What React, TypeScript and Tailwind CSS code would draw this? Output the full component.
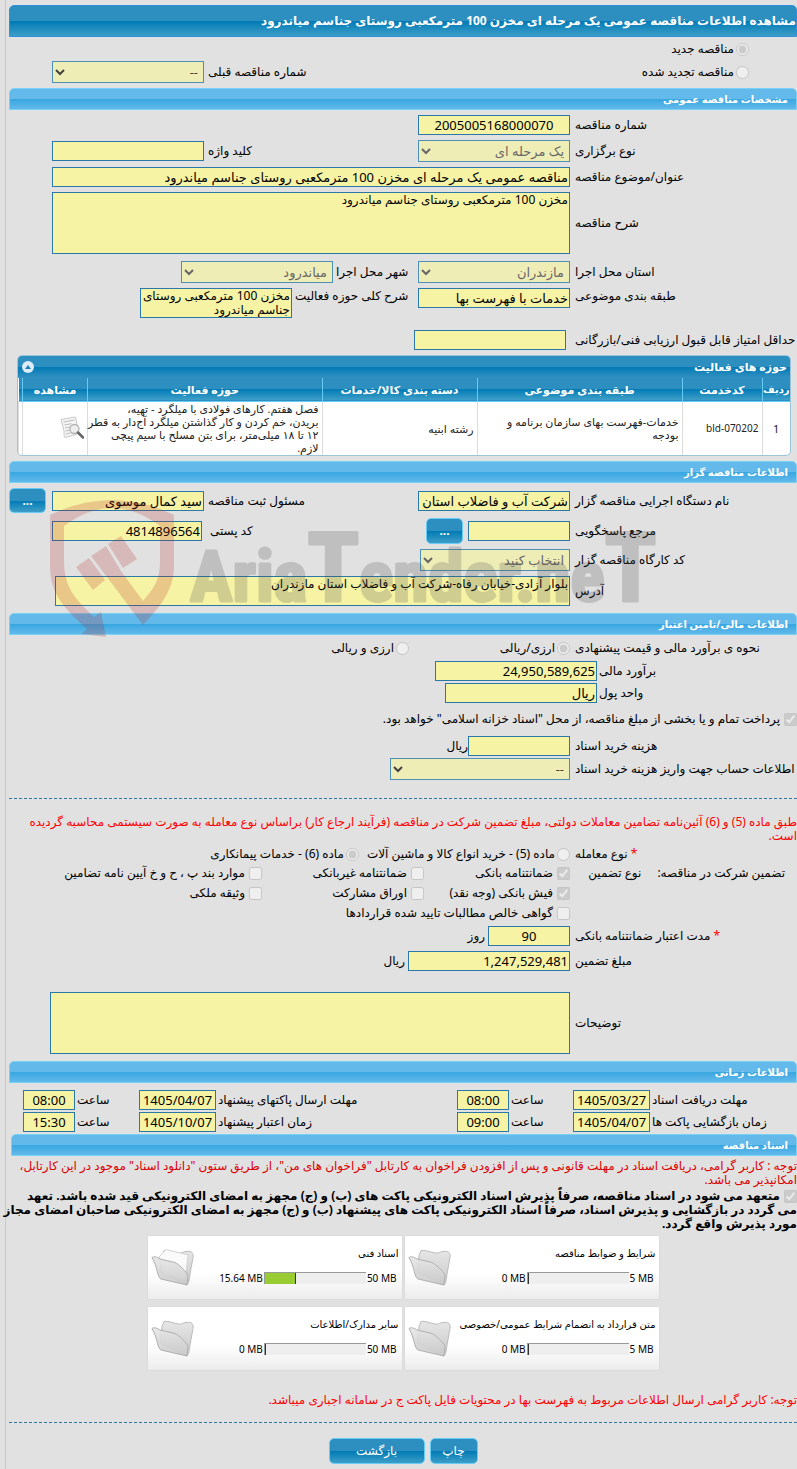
import React, { useId } from "react";
import clsx from "clsx";

const fieldBase = "border border-[#2a78a8] bg-[#f6f3a5] px-px text-black outline-none";

type InputProps = {
  id?: string;
  label?: string;
  value?: string;
  className?: string;
};

const TextInput: React.FC<InputProps> = ({ id, label, value = "", className }) => (
  <input
    id={id}
    aria-label={label}
    type="text"
    readOnly
    value={value}
    className={clsx(fieldBase, "h-5 shrink-0 text-[13px] leading-[18px]", className)}
  />
);

const TextArea: React.FC<InputProps> = ({ id, value = "", className }) => (
  <textarea
    id={id}
    readOnly
    value={value}
    className={clsx(
      fieldBase,
      "block resize-none overflow-hidden text-xs leading-[14px]",
      className
    )}
  />
);

const SelectBox: React.FC<InputProps> = ({ id, value = "--", className }) => (
  <select
    id={id}
    disabled
    className={clsx(
      "h-[22px] shrink-0 border border-[#0f6ea0] bg-[#f6f3a5] px-px text-[13px] leading-4 opacity-70",
      value === "--" ? "text-black" : "text-[#333]",
      className
    )}
  >
    <option>{value}</option>
  </select>
);

type RowProps = {
  label: string;
  htmlFor?: string;
  required?: boolean;
  className?: string;
  labelClassName?: string;
  children: React.ReactNode;
};

// A form line: the label hugs the field that follows it
const Row: React.FC<RowProps> = ({
  label,
  htmlFor,
  required,
  className,
  labelClassName = "w-[222px] ml-[5px]",
  children,
}) => (
  <div className={clsx("flex items-center", className)}>
    <label
      htmlFor={htmlFor}
      className={clsx("shrink-0 whitespace-nowrap text-left", labelClassName)}
    >
      {required && <span className="text-[#f00]">* </span>}
      {label}
    </label>
    {children}
  </div>
);

type TickProps = {
  type: "radio" | "checkbox";
  name?: string;
  label: string;
  checked?: boolean;
  className?: string;
};

const Tick: React.FC<TickProps> = ({ type, name, label, checked, className }) => {
  const id = useId();
  return (
    <span className={clsx("flex shrink-0 items-center whitespace-nowrap", className)}>
      <input
        id={id}
        type={type}
        name={name}
        defaultChecked={checked}
        disabled
        className="size-[13px]"
      />
      <label htmlFor={id} className={type === "radio" ? "mr-0.5" : "mr-1"}>
        {label}
      </label>
    </span>
  );
};

const SectionBar: React.FC<{ title: string; className?: string }> = ({
  title,
  className,
}) => (
  <h2
    className={clsx(
      "flex h-[22px] items-center rounded-t-[5px] border border-[#78d2f7] bg-[linear-gradient(#63b9ea_50%,#38a6e0_50%,#63b9ea)] pr-2 text-[10px] font-bold text-white",
      className
    )}
  >
    {title}
  </h2>
);

const Button: React.FC<{ children: React.ReactNode; className?: string; label?: string }> = ({
  children,
  className,
  label,
}) => (
  <button
    type="button"
    aria-label={label}
    className={clsx(
      "shrink-0 rounded-[5px] border border-[#66ccf5] bg-[linear-gradient(#2d8fbf_50%,#007ab5_50%,#3e9ec8)] text-white",
      className
    )}
  >
    {children}
  </button>
);

const PreviewIcon = () => (
  <svg width="24" height="24" viewBox="0 0 24 24" fill="none">
    <path d="M1 3.5 15.500 1 19 17.500 5 21.500C3 19 5 17 3.500 13Z" fill="#f4f4f4" stroke="#c9c9c9" />
    <path
      d="m3.500 6 11-2M4.500 9l7-1.300M5 12l5-1M5.500 15l5-1M6 18l6-1.500"
      stroke="#bdbdbd"
    />
    <circle cx="14.500" cy="13" r="4.500" fill="#ececec" fillOpacity=".85" stroke="#b5b5b5" strokeWidth="1.300" />
    <path d="m18 16.500 5 5" stroke="#666" strokeWidth="2.500" strokeLinecap="round" />
  </svg>
);

const FolderIcon: React.FC<{ filled?: boolean }> = ({ filled }) => (
  <svg width="44" height="38" viewBox="0 0 44 38" fill="none">
    <defs>
      <linearGradient id="folder" x1="0" y1="0" x2="0" y2="1">
        <stop offset="0" stopColor="#e6e6e6" />
        <stop offset="1" stopColor="#c9c9c9" />
      </linearGradient>
    </defs>
    <path
      d="M11 7.500 13 2.500C16 1.500 22 4 27 5 31 6 32 3 36 3.500 40 2.500 43 5 42 9.500L39 26C38.500 31 37.500 36 36 37L9 24Z"
      fill="url(#folder)"
      stroke="#bcbcbc"
    />
    {filled && (
      <path
        d="M8 9 15 1.500 37 7 34 32 12 26Z"
        fill="#fafafa"
        stroke="#d5d5d5"
      />
    )}
    <path
      d="M1 9.500C3 8 6 9 9 11L22 14C27 15 31 20 35 24L37 27 36 37 10 31C6 29 7 20 1 9.500Z"
      fill="url(#folder)"
      fillOpacity=".9"
      stroke="#b0b0b0"
    />
  </svg>
);

const Watermark = () => (
  <svg
    className="pointer-events-none absolute top-px left-[41px] z-10"
    width="610"
    height="160"
    viewBox="50 484 610 160"
  >
    <g fill="#b41919" fillOpacity=".2">
      <path
        fillRule="evenodd"
        d="M50 515Q112 485 174 515V566C174 590 160 607 143 625L107 577 91 556 106 546 121 571 143 601C154 588 160 580 160 562V526Q112 490 64 526V562C64 590 79 602 94 617L101 612 106 637 81 634 87 629C66 610 50 595 50 566Z"
      />
      <path d="M76 567 89 558 105 580 93 590ZM108 544 121 536 137 559 123 568Z" />
    </g>
    <text
      x="190"
      y="601"
      direction="ltr"
      fill="#4b4b4b"
      stroke="#4b4b4b"
      strokeWidth="3"
      strokeLinejoin="round"
      opacity=".22"
      fontSize="71"
      fontWeight="bold"
      fontFamily="'Liberation Sans Narrow', 'Roboto Condensed', 'Liberation Sans', sans-serif"
    >
      Aria<tspan fontSize="96">T</tspan>ender.ne<tspan fontSize="96">T</tspan>
    </text>
  </svg>
);

const activities = [
  {
    row: "1",
    code: "bld-070202",
    subject: "خدمات-فهرست بهای سازمان برنامه و بودجه",
    category: "رشته ابنیه",
    scope: [
      "فصل هفتم. کارهای فولادی با میلگرد - تهیه،",
      "بریدن، خم کردن و کار گذاشتن میلگرد آج‌دار به قطر",
      "۱۲ تا ۱۸ میلی‌متر، برای بتن مسلح با سیم پیچی",
      "لازم.",
    ].join("\n"),
  },
];

const ActivityTable = () => (
  <div className="mt-[5px] mr-1.5 ml-2 overflow-hidden rounded-[5px] border border-[#9cc4dc] bg-white">
    <div className="flex h-[22px] items-center justify-between bg-[linear-gradient(#2d8fbf_50%,#007ab5_50%,#3590c0)] pr-[3px] pl-1 text-white">
      <h3 className="text-[11px] font-bold">حوزه های فعالیت</h3>
      <button
        type="button"
        aria-label="بستن"
        className="flex size-3 items-center justify-center rounded-full bg-[#dcebf5]"
      >
        <svg width="6" height="4" viewBox="0 0 6 4">
          <path d="M0 4 3 0l3 4Z" fill="#1a7fb5" />
        </svg>
      </button>
    </div>
    <table className="w-full table-fixed border-collapse text-[11px] leading-[13px]">
      <colgroup>
        <col className="w-7" />
        <col className="w-20" />
        <col className="w-[205px]" />
        <col className="w-[155px]" />
        <col />
        <col className="w-[65px]" />
        <col className="w-1" />
      </colgroup>
      <thead>
        <tr className="h-[23px] border-b border-[#66ccf5] bg-[linear-gradient(#2d8fbf_50%,#007ab5_50%,#3e9ec8)] text-white [&>th]:border-l [&>th]:border-[#66ccf5] [&>th]:whitespace-nowrap">
          <th className="text-[10px]">ردیف</th>
          <th>کدخدمت</th>
          <th>طبقه بندی موضوعی</th>
          <th>دسته بندی کالا/خدمات</th>
          <th>حوزه فعالیت</th>
          <th>مشاهده</th>
          <td></td>
        </tr>
      </thead>
      <tbody>
        {activities.map((item) => (
          <tr
            key={item.row}
            className="h-[54px] text-[#222] [&>td]:border-l [&>td]:border-[#ddd] [&>td]:pr-[3px]"
          >
            <td className="pl-[3px] text-center">{item.row}</td>
            <td className="text-[10px]">{item.code}</td>
            <td className="pl-[3px]">{item.subject}</td>
            <td>{item.category}</td>
            <td className="whitespace-pre">{item.scope}</td>
            <td>
              <a href="#preview" aria-label="مشاهده" className="block w-6">
                <PreviewIcon />
              </a>
            </td>
            <td></td>
          </tr>
        ))}
      </tbody>
    </table>
  </div>
);

const documents = [
  { title: "شرایط و ضوابط مناقصه", used: 0, total: 5 },
  { title: "اسناد فنی", used: 15.64, total: 50 },
  { title: "متن قرارداد به انضمام شرایط عمومی/خصوصی", used: 0, total: 5 },
  { title: "سایر مدارک/اطلاعات", used: 0, total: 50 },
];

const DocumentCard: React.FC<(typeof documents)[number]> = ({ title, used, total }) => (
  <div className="relative h-[63px] bg-linear-to-b from-white from-60% to-[#ececec] px-[3px] pt-2.5 text-[10px] shadow-[0_0_1px_#bbb]">
    <div className="absolute top-3 left-[3px]">
      <FolderIcon filled={used > 0} />
    </div>
    <h3 className="relative leading-[14px]">{title}</h3>
    <div dir="ltr" className="mt-3 flex items-center justify-end gap-px pr-0.5 leading-3">
      <span>{used} MB</span>
      <span className="flex h-3 w-[102px] border-t border-l border-[#999] bg-[#eee]">
        <span
          className="border-r border-[#333] bg-[#9c3]"
          style={{ width: `${Math.max((used / total) * 100, 1)}%` }}
        />
      </span>
      <span>{total} MB</span>
    </div>
  </div>
);

const TimeRow: React.FC<{
  className: string;
  items: { label: string; date: string; time: string }[];
}> = ({ className, items: [first, second] }) => {
  const id = useId();
  return (
    <div className={clsx("flex items-center", className)}>
      <label htmlFor={`${id}-1`} className="w-[145px] shrink-0 text-left whitespace-nowrap">
        {first.label}
      </label>
      <TextInput id={`${id}-1`} value={first.date} className="mr-0.5 w-[77px] text-center" />
      <label htmlFor={`${id}-2`} className="w-[62px] text-left">
        ساعت
      </label>
      <TextInput id={`${id}-2`} value={first.time} className="mr-0.5 w-[52px] text-center" />
      <label htmlFor={`${id}-3`} className="flex-1 text-left whitespace-nowrap">
        {second.label}
      </label>
      <TextInput id={`${id}-3`} value={second.date} className="mr-0.5 w-[77px] text-center" />
      <label htmlFor={`${id}-4`} className="w-[62px] text-left">
        ساعت
      </label>
      <TextInput
        id={`${id}-4`}
        value={second.time}
        className="mr-0.5 ml-[14px] w-[52px] text-center"
      />
    </div>
  );
};

export default function App() {
  return (
    <div
      dir="rtl"
      lang="fa"
      className="min-h-screen overflow-hidden bg-[#e1e1e1] pl-[5px] font-['Noto_Sans','DejaVu_Sans',sans-serif] text-xs leading-[14px] text-black"
    >
      <main className="min-h-screen border-l border-[#c8c8c8] pt-[5px] pb-[5px] pl-[3px]">
        <h1 className="flex h-8 items-center rounded-t-[5px] border border-[#3090dc] bg-[linear-gradient(#2d8fbf_50%,#007ab5_50%,#3e9ec8)] text-xs font-bold whitespace-nowrap text-white">
          مشاهده اطلاعات مناقصه عمومی یک مرحله ای مخزن 100 مترمکعبی روستای جناسم میاندرود
        </h1>

        <div className="mt-1 flex h-4 pr-12">
          <Tick type="radio" name="kind" label="مناقصه جدید" checked />
        </div>
        <div className="mt-1 flex items-center pr-12">
          <Tick type="radio" name="kind" label="مناقصه تجدید شده" />
          <label htmlFor="prev" className="ml-1 flex-1 text-left">
            شماره مناقصه قبلی
          </label>
          <SelectBox id="prev" className="ml-[43px] w-[152px]" />
        </div>

        <SectionBar title="مشخصات مناقصه عمومی" className="mt-[5px]" />
        <Row label="شماره مناقصه" htmlFor="number" className="mt-[5px]">
          <TextInput id="number" value="2005005168000070" className="w-[152px] text-center" />
        </Row>
        <Row label="نوع برگزاری" htmlFor="method" className="mt-[5px]">
          <SelectBox id="method" value="یک مرحله ای" className="w-[152px]" />
          <label htmlFor="keyword" className="ml-1 flex-1 text-left">
            کلید واژه
          </label>
          <TextInput id="keyword" className="ml-[43px] w-[152px]" />
        </Row>
        <Row label="عنوان/موضوع مناقصه" htmlFor="subject" className="mt-[5px]">
          <TextInput
            id="subject"
            value="مناقصه عمومی یک مرحله ای مخزن 100 مترمکعبی روستای جناسم میاندرود"
            className="ml-[43px] min-w-0 flex-1"
          />
        </Row>
        <Row label="شرح مناقصه" htmlFor="details" className="mt-[5px]">
          <TextArea
            id="details"
            value="مخزن 100 مترمکعبی روستای جناسم میاندرود"
            className="ml-[43px] h-[62px] flex-1"
          />
        </Row>
        <Row label="استان محل اجرا" htmlFor="province" className="mt-[7px]">
          <SelectBox id="province" value="مازندران" className="w-[152px]" />
          <label htmlFor="city" className="ml-[3px] w-[82px] text-left whitespace-nowrap">
            شهر محل اجرا
          </label>
          <SelectBox id="city" value="میاندرود" className="w-[152px]" />
        </Row>
        <Row
          label="طبقه بندی موضوعی"
          htmlFor="class"
          className="mt-[5px] items-start"
          labelClassName="w-[222px] ml-[5px] pt-px"
        >
          <TextInput id="class" value="خدمات با فهرست بها" className="w-[152px]" />
          <label htmlFor="scope" className="ml-[3px] w-[123px] pt-px text-left whitespace-nowrap">
            شرح کلی حوزه فعالیت
          </label>
          <TextArea
            id="scope"
            value="مخزن 100 مترمکعبی روستای جناسم میاندرود"
            className="h-[30px] w-[152px]"
          />
        </Row>
        <Row
          label="حداقل امتیاز قابل قبول ارزیابی فنی/بازرگانی"
          htmlFor="score"
          className="mt-3"
          labelClassName="w-[222px] ml-[9px]"
        >
          <TextInput id="score" className="w-[152px]" />
        </Row>

        <ActivityTable />

        <SectionBar title="اطلاعات مناقصه گزار" className="mt-[5px]" />
        <section className="relative">
          <Watermark />
          <Row label="نام دستگاه اجرایی مناقصه گزار" htmlFor="org" className="h-[35px]">
            <TextInput id="org" value="شرکت آب و فاضلاب استان" className="w-[152px]" />
            <label htmlFor="owner" className="ml-1 flex-1 text-left">
              مسئول ثبت مناقصه
            </label>
            <TextInput id="owner" value="سید کمال موسوی" className="ml-1.5 w-[152px]" />
            <Button label="انتخاب مسئول" className="h-[25px] w-[37px] font-bold">
              ...
            </Button>
          </Row>
          <Row label="مرجع پاسخگویی" htmlFor="contact" className="h-[26px]">
            <TextInput id="contact" className="ml-[5px] w-[102px]" />
            <Button label="انتخاب مرجع" className="h-[26px] w-[37px] font-bold">
              ...
            </Button>
            <label htmlFor="postal" className="ml-2 flex-1 text-left">
              کد پستی
            </label>
            <TextInput id="postal" value="4814896564" className="ml-[43px] w-[150px]" />
          </Row>
          <Row label="کد کارگاه مناقصه گزار" htmlFor="workshop" className="mt-[5px]">
            <SelectBox id="workshop" value="انتخاب کنید" className="w-[150px]" />
          </Row>
          <Row label="آدرس" htmlFor="address" className="mt-[5px]">
            <TextArea
              id="address"
              value="بلوار آزادی-خیابان رفاه-شرکت آب و فاضلاب استان مازندران"
              className="ml-[46px] h-[30px] flex-1"
            />
          </Row>
        </section>

        <SectionBar title="اطلاعات مالی/تامین اعتبار" className="mt-[7px]" />
        <Row label="نحوه ی برآورد مالی و قیمت پیشنهادی" className="mt-[5px] h-4">
          <Tick type="radio" name="currency" label="ارزی/ریالی" checked className="w-[161px]" />
          <Tick type="radio" name="currency" label="ارزی و ریالی" />
        </Row>
        <Row
          label="برآورد مالی"
          htmlFor="estimate"
          className="mt-[5px]"
          labelClassName="w-[198px] ml-0.5"
        >
          <TextInput id="estimate" value="24,950,589,625" className="w-[162px]" />
        </Row>
        <Row
          label="واحد پول"
          htmlFor="unit"
          className="mt-0.5"
          labelClassName="w-[198px] ml-0.5"
        >
          <TextInput id="unit" value="ریال" className="w-[152px]" />
        </Row>
        <div className="mt-2 flex h-4">
          <Tick
            type="checkbox"
            checked
            label='پرداخت تمام و یا بخشی از مبلغ مناقصه، از محل "اسناد خزانه اسلامی" خواهد بود.'
          />
        </div>
        <Row label="هزینه خرید اسناد" htmlFor="fee" className="mt-[9px]">
          <TextInput id="fee" className="w-[102px]" />
          <span>ریال</span>
        </Row>
        <Row label="اطلاعات حساب جهت واریز هزینه خرید اسناد" htmlFor="account" className="mt-0.5">
          <SelectBox id="account" className="w-[180px]" />
        </Row>

        <hr className="mt-[18px] border-t border-dashed border-[#2a78a8]" />
        <p className="mt-4 text-[#f00]">
          طبق ماده (5) و (6) آئین‌نامه تضامین معاملات دولتی، مبلغ تضمین شرکت در مناقصه (فرآیند ارجاع
          کار) براساس نوع معامله به صورت سیستمی محاسبه گردیده است.
        </p>

        <Row label="نوع معامله" required className="mt-[3px] h-4">
          <Tick
            type="radio"
            name="deal"
            label="ماده (5) - خرید انواع کالا و ماشین آلات"
            className="ml-2"
          />
          <Tick type="radio" name="deal" label="ماده (6) - خدمات پیمانکاری" checked />
        </Row>
        <div className="mt-px flex">
          <div className="ml-[5px] flex h-5 w-[222px] shrink-0 items-center gap-4 pr-3 whitespace-nowrap">
            <span>تضمین شرکت در مناقصه:</span>
            <span>نوع تضمین</span>
          </div>
          <div className="grid flex-1 auto-rows-[20px] grid-cols-[146px_162px_1fr]">
            <Tick type="checkbox" label="ضمانتنامه بانکی" checked />
            <Tick type="checkbox" label="ضمانتنامه غیربانکی" />
            <Tick type="checkbox" label="موارد بند پ ، ح و خ آیین نامه تضامین" />
            <Tick type="checkbox" label="فیش بانکی (وجه نقد)" checked />
            <Tick type="checkbox" label="اوراق مشارکت" />
            <Tick type="checkbox" label="وثیقه ملکی" />
            <Tick type="checkbox" label="گواهی خالص مطالبات تایید شده قراردادها" />
          </div>
        </div>
        <Row label="مدت اعتبار ضمانتنامه بانکی" required htmlFor="validity" className="mt-[3px]">
          <TextInput id="validity" value="90" className="ml-[3px] w-[82px] text-center" />
          <span>روز</span>
        </Row>
        <Row label="مبلغ تضمین" htmlFor="amount" className="mt-[5px]">
          <TextInput id="amount" value="1,247,529,481" className="ml-[3px] w-[162px]" />
          <span>ریال</span>
        </Row>
        <Row label="توضیحات" htmlFor="notes" className="mt-[21px]">
          <TextArea id="notes" className="ml-[41px] h-[62px] flex-1" />
        </Row>

        <SectionBar title="اطلاعات زمانی" className="mt-[7px]" />
        <TimeRow
          className="mt-[7px]"
          items={[
            { label: "مهلت دریافت اسناد", date: "1405/03/27", time: "08:00" },
            { label: "مهلت ارسال پاکتهای پیشنهاد", date: "1405/04/07", time: "08:00" },
          ]}
        />
        <TimeRow
          className="mt-0.5"
          items={[
            { label: "زمان بازگشایی پاکت ها", date: "1405/04/07", time: "09:00" },
            { label: "زمان اعتبار پیشنهاد", date: "1405/10/07", time: "15:30" },
          ]}
        />

        <SectionBar title="اسناد مناقصه" className="mt-0.5 ml-0.5" />
        <p className="mt-[3px] text-[#d00]">
          توجه : کاربر گرامی، دریافت اسناد در مهلت قانونی و پس از افزودن فراخوان به کارتابل "فراخوان
          های من"، از طریق ستون "دانلود اسناد" موجود در این کارتابل،
          <br />
          امکانپذیر می باشد.
        </p>
        <p className="mt-0.5 font-bold whitespace-nowrap">
          <input
            id="commit"
            type="checkbox"
            defaultChecked
            disabled
            className="ml-1 size-[13px] align-middle"
          />
          <label htmlFor="commit">
            متعهد می شود در اسناد مناقصه، صرفاً پذیرش اسناد الکترونیکی پاکت های (ب) و (ج) مجهز به
            امضای الکترونیکی قید شده باشد. تعهد
            <br />
            می گردد در بازگشایی و پذیرش اسناد، صرفاً اسناد الکترونیکی پاکت های پیشنهاد (ب) و (ج)
            مجهز به امضای الکترونیکی صاحبان امضای مجاز
            <br />
            مورد پذیرش واقع گردد.
          </label>
        </p>

        <div className="mt-[5px] grid grid-cols-[254px_254px] justify-center gap-x-[3px] gap-y-2">
          {documents.map((item) => (
            <DocumentCard key={item.title} {...item} />
          ))}
        </div>

        <p className="mt-[23px] text-[#f00]">
          توجه: کاربر گرامی ارسال اطلاعات مربوط به فهرست بها در محتویات فایل پاکت ج در سامانه اجباری
          میباشد.
        </p>
        <hr className="mt-[15px] border-t border-dashed border-[#2a78a8]" />
        <div className="mt-[15px] flex justify-center gap-[5px]">
          <Button className="h-[26px] w-12 text-xs">چاپ</Button>
          <Button className="h-[26px] w-24 text-xs">بازگشت</Button>
        </div>
      </main>
    </div>
  );
}
